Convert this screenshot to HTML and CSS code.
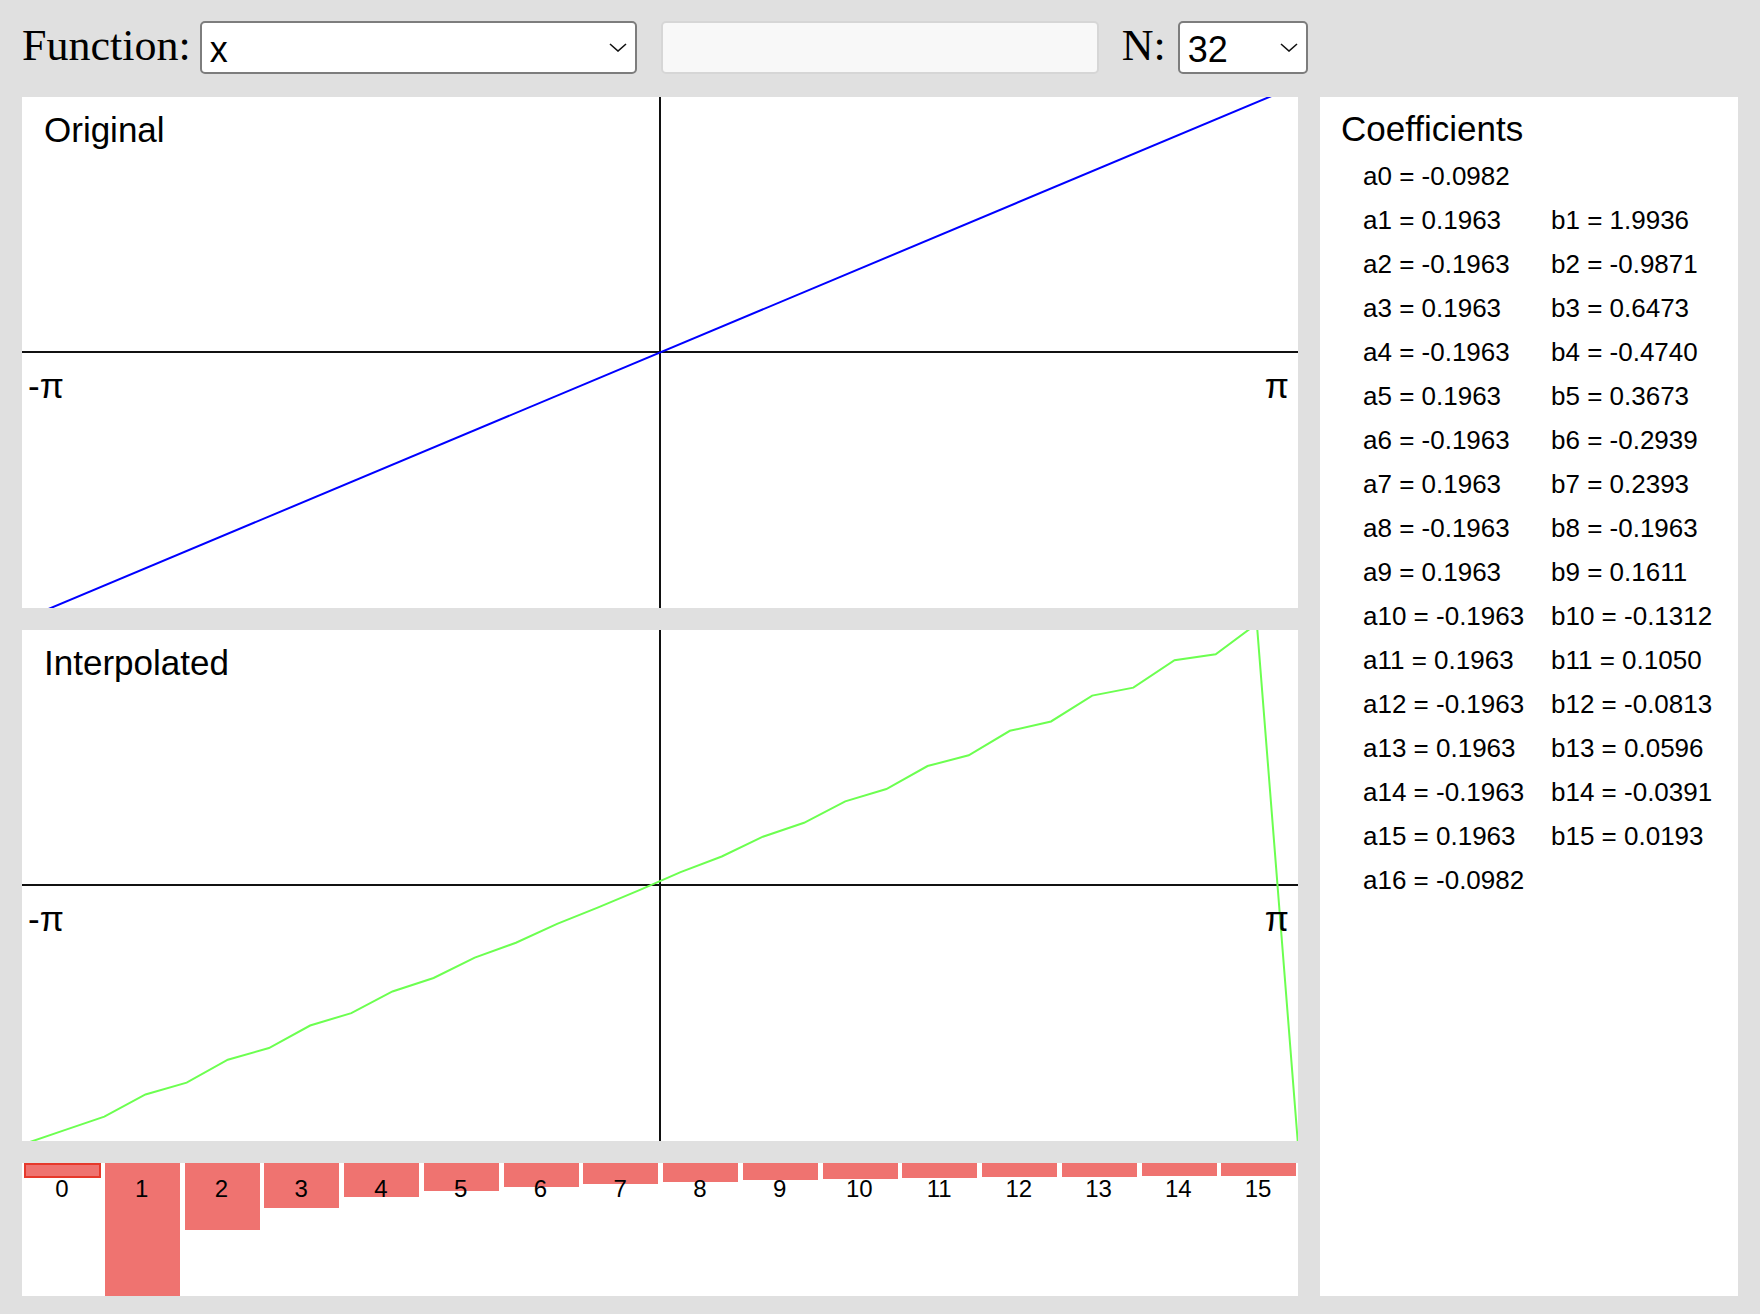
FILE: index.html
```html
<!DOCTYPE html>
<html lang="en">
<head>
<meta charset="utf-8">
<title>Fourier series</title>
<link rel="stylesheet" href="styles.css">
</head>
<body>
<div class="app">
  <header class="toolbar">
    <label class="lbl lbl-fn" for="fn">Function:</label>
    <div class="sel-wrap sel-fn">
      <select id="fn"><option>x</option></select>
      <svg class="chev" viewBox="0 0 18 9" width="18" height="9"><path d="M1 1 L9 8 L17 1"/></svg>
    </div>
    <input class="expr" type="text" disabled>
    <label class="lbl lbl-n" for="n">N:</label>
    <div class="sel-wrap sel-n">
      <select id="n"><option>32</option></select>
      <svg class="chev" viewBox="0 0 18 9" width="18" height="9"><path d="M1 1 L9 8 L17 1"/></svg>
    </div>
  </header>

  <main class="main">
    <section class="plots">
      <div class="panel plot">
        <svg class="plot-svg" viewBox="0 0 1276 511" width="1276" height="511">
          <line class="axis" x1="0" y1="255" x2="1276" y2="255"/>
          <line class="axis" x1="638" y1="0" x2="638" y2="511"/>
          <line class="orig" x1="0" y1="523.06" x2="1276" y2="-12.06"/>
          <text class="plot-title" x="22" y="45">Original</text>
          <text class="tick" x="6" y="301">-π</text>
          <text class="tick" x="1267" y="301" text-anchor="end">π</text>
        </svg>
      </div>
      <div class="panel plot">
        <svg class="plot-svg" viewBox="0 0 1276 511" width="1276" height="511">
          <line class="axis" x1="0" y1="255" x2="1276" y2="255"/>
          <line class="axis" x1="638" y1="0" x2="638" y2="511"/>
          <polyline id="interp" class="interp" points=""/>
          <text class="plot-title" x="22" y="45">Interpolated</text>
          <text class="tick" x="6" y="301">-π</text>
          <text class="tick" x="1267" y="301" text-anchor="end">π</text>
        </svg>
      </div>
      <div class="panel bars">
        <div class="col"><div class="bar bar-sel" style="height:15px"></div><span class="num">0</span></div>
        <div class="col"><div class="bar" style="height:133px"></div><span class="num">1</span></div>
        <div class="col"><div class="bar" style="height:67px"></div><span class="num">2</span></div>
        <div class="col"><div class="bar" style="height:45px"></div><span class="num">3</span></div>
        <div class="col"><div class="bar" style="height:34px"></div><span class="num">4</span></div>
        <div class="col"><div class="bar" style="height:28px"></div><span class="num">5</span></div>
        <div class="col"><div class="bar" style="height:23.5px"></div><span class="num">6</span></div>
        <div class="col"><div class="bar" style="height:20.6px"></div><span class="num">7</span></div>
        <div class="col"><div class="bar" style="height:18.5px"></div><span class="num">8</span></div>
        <div class="col"><div class="bar" style="height:16.9px"></div><span class="num">9</span></div>
        <div class="col"><div class="bar" style="height:15.7px"></div><span class="num">10</span></div>
        <div class="col"><div class="bar" style="height:14.8px"></div><span class="num">11</span></div>
        <div class="col"><div class="bar" style="height:14.1px"></div><span class="num">12</span></div>
        <div class="col"><div class="bar" style="height:13.6px"></div><span class="num">13</span></div>
        <div class="col"><div class="bar" style="height:13.3px"></div><span class="num">14</span></div>
        <div class="col"><div class="bar" style="height:13.1px"></div><span class="num">15</span></div>
      </div>
    </section>

    <aside class="panel coeffs">
      <h2 class="coeffs-title">Coefficients</h2>
      <div class="coef-grid">
        <span>a0 = -0.0982</span><span></span>
        <span>a1 = 0.1963</span><span>b1 = 1.9936</span>
        <span>a2 = -0.1963</span><span>b2 = -0.9871</span>
        <span>a3 = 0.1963</span><span>b3 = 0.6473</span>
        <span>a4 = -0.1963</span><span>b4 = -0.4740</span>
        <span>a5 = 0.1963</span><span>b5 = 0.3673</span>
        <span>a6 = -0.1963</span><span>b6 = -0.2939</span>
        <span>a7 = 0.1963</span><span>b7 = 0.2393</span>
        <span>a8 = -0.1963</span><span>b8 = -0.1963</span>
        <span>a9 = 0.1963</span><span>b9 = 0.1611</span>
        <span>a10 = -0.1963</span><span>b10 = -0.1312</span>
        <span>a11 = 0.1963</span><span>b11 = 0.1050</span>
        <span>a12 = -0.1963</span><span>b12 = -0.0813</span>
        <span>a13 = 0.1963</span><span>b13 = 0.0596</span>
        <span>a14 = -0.1963</span><span>b14 = -0.0391</span>
        <span>a15 = 0.1963</span><span>b15 = 0.0193</span>
        <span>a16 = -0.0982</span><span></span>
      </div>
    </aside>
  </main>
</div>
<script src="script.js"></script>
</body>
</html>
```

FILE: styles.css
```css
html, body {
  margin: 0;
  padding: 0;
}

body {
  background: #e0e0e0;
  width: 1760px;
  height: 1314px;
  overflow: hidden;
  color: #000;
}

.toolbar {
  display: flex;
  align-items: center;
  height: 53px;
  padding: 21px 22px 0;
}

.lbl {
  font-family: "Liberation Serif", "Times New Roman", serif;
  font-size: 44px;
  line-height: 49px;
  margin-bottom: 5px;
}

.lbl-fn {
  margin-right: 9px;
}

.lbl-n {
  margin-left: 23px;
  margin-right: 12px;
}

.sel-wrap {
  position: relative;
  height: 53px;
}

.sel-fn {
  width: 437px;
}

.sel-n {
  width: 130px;
}

.sel-wrap select {
  -webkit-appearance: none;
  appearance: none;
  width: 100%;
  height: 53px;
  box-sizing: border-box;
  margin: 0;
  padding: 4px 0 0 8px;
  border: 2px solid #7d7d7d;
  border-radius: 5px;
  background: #fff;
  color: #000;
  font-family: "Liberation Sans", Arial, sans-serif;
  font-size: 36px;
}

.chev {
  position: absolute;
  right: 10px;
  top: 22px;
  pointer-events: none;
}

.chev path {
  fill: none;
  stroke: #111;
  stroke-width: 1.6;
}

.expr {
  margin: 0 0 0 24px;
  width: 438px;
  height: 53px;
  box-sizing: border-box;
  border: 2px solid #d6d6d6;
  border-radius: 5px;
  background: #f8f8f8;
  padding: 0;
}

.main {
  display: flex;
  gap: 22px;
  padding: 23px 22px 0;
}

.plots {
  width: 1276px;
  display: flex;
  flex-direction: column;
  gap: 22px;
}

.panel {
  background: #fff;
}

.plot {
  height: 511px;
}

.plot-svg {
  display: block;
  overflow: hidden;
}

.axis {
  stroke: #111;
  stroke-width: 2;
}

.orig {
  stroke: #0000ff;
  stroke-width: 2;
}

.interp {
  fill: none;
  stroke: #6cff50;
  stroke-width: 2;
  stroke-linejoin: miter;
}

.plot-title,
.tick {
  font-family: "Liberation Sans", Arial, sans-serif;
  font-size: 35px;
  fill: #000;
}

.bars {
  display: flex;
  height: 133px;
  overflow: hidden;
}

.col {
  flex: 1;
  position: relative;
}

.bar {
  margin-left: 3px;
  width: 75px;
  background: #ef7370;
}

.bar-sel {
  margin-left: 2px;
  width: 77px;
  box-sizing: border-box;
  border: 2px solid #e6392c;
}

.num {
  position: absolute;
  left: 0;
  right: 0;
  top: 14px;
  text-align: center;
  font-family: "Liberation Sans", Arial, sans-serif;
  font-size: 24px;
  line-height: 24px;
}

.coeffs {
  width: 418px;
  height: 1199px;
  box-sizing: border-box;
  padding: 12px 0 0 21px;
}

.coeffs-title {
  margin: 0;
  font-family: "Liberation Sans", Arial, sans-serif;
  font-weight: normal;
  font-size: 35px;
  line-height: 40px;
}

.coef-grid {
  margin-top: 5px;
  padding-left: 22px;
  display: grid;
  grid-template-columns: 188px auto;
  font-family: "Liberation Sans", Arial, sans-serif;
  font-size: 26px;
  line-height: 44px;
  white-space: nowrap;
}
```

FILE: script.js
```js
(function () {
  var N = 32, PI = Math.PI, half = N / 2;
  var xs = [], fs = [], k, m;
  for (k = 0; k < N; k++) {
    var x = -PI + 2 * PI * k / N;
    xs.push(x);
    fs.push(x);
  }
  var a = [], b = [];
  for (m = 0; m <= half; m++) {
    var sa = 0, sb = 0;
    for (k = 0; k < N; k++) {
      sa += fs[k] * Math.cos(m * xs[k]);
      sb += fs[k] * Math.sin(m * xs[k]);
    }
    var s = (m === 0 || m === half) ? 1 / N : 2 / N;
    a.push(sa * s);
    b.push(sb * s);
  }
  function g(x) {
    var y = a[0] / 2;
    for (var i = 1; i < half; i++) {
      y += a[i] * Math.cos(i * x) + b[i] * Math.sin(i * x);
    }
    y += (a[half] / 2) * Math.cos(half * x);
    return y;
  }
  var W = 1276, H = 511, sx = (W / 2) / PI, sy = (H / 2) / 3;
  var pts = [];
  for (var j = 0; j < N; j++) {
    var t = -PI + 2 * PI * j / (N - 1);
    pts.push((W / 2 + t * sx).toFixed(2) + ',' + (H / 2 - g(t) * sy).toFixed(2));
  }
  document.getElementById('interp').setAttribute('points', pts.join(' '));
})();
```
